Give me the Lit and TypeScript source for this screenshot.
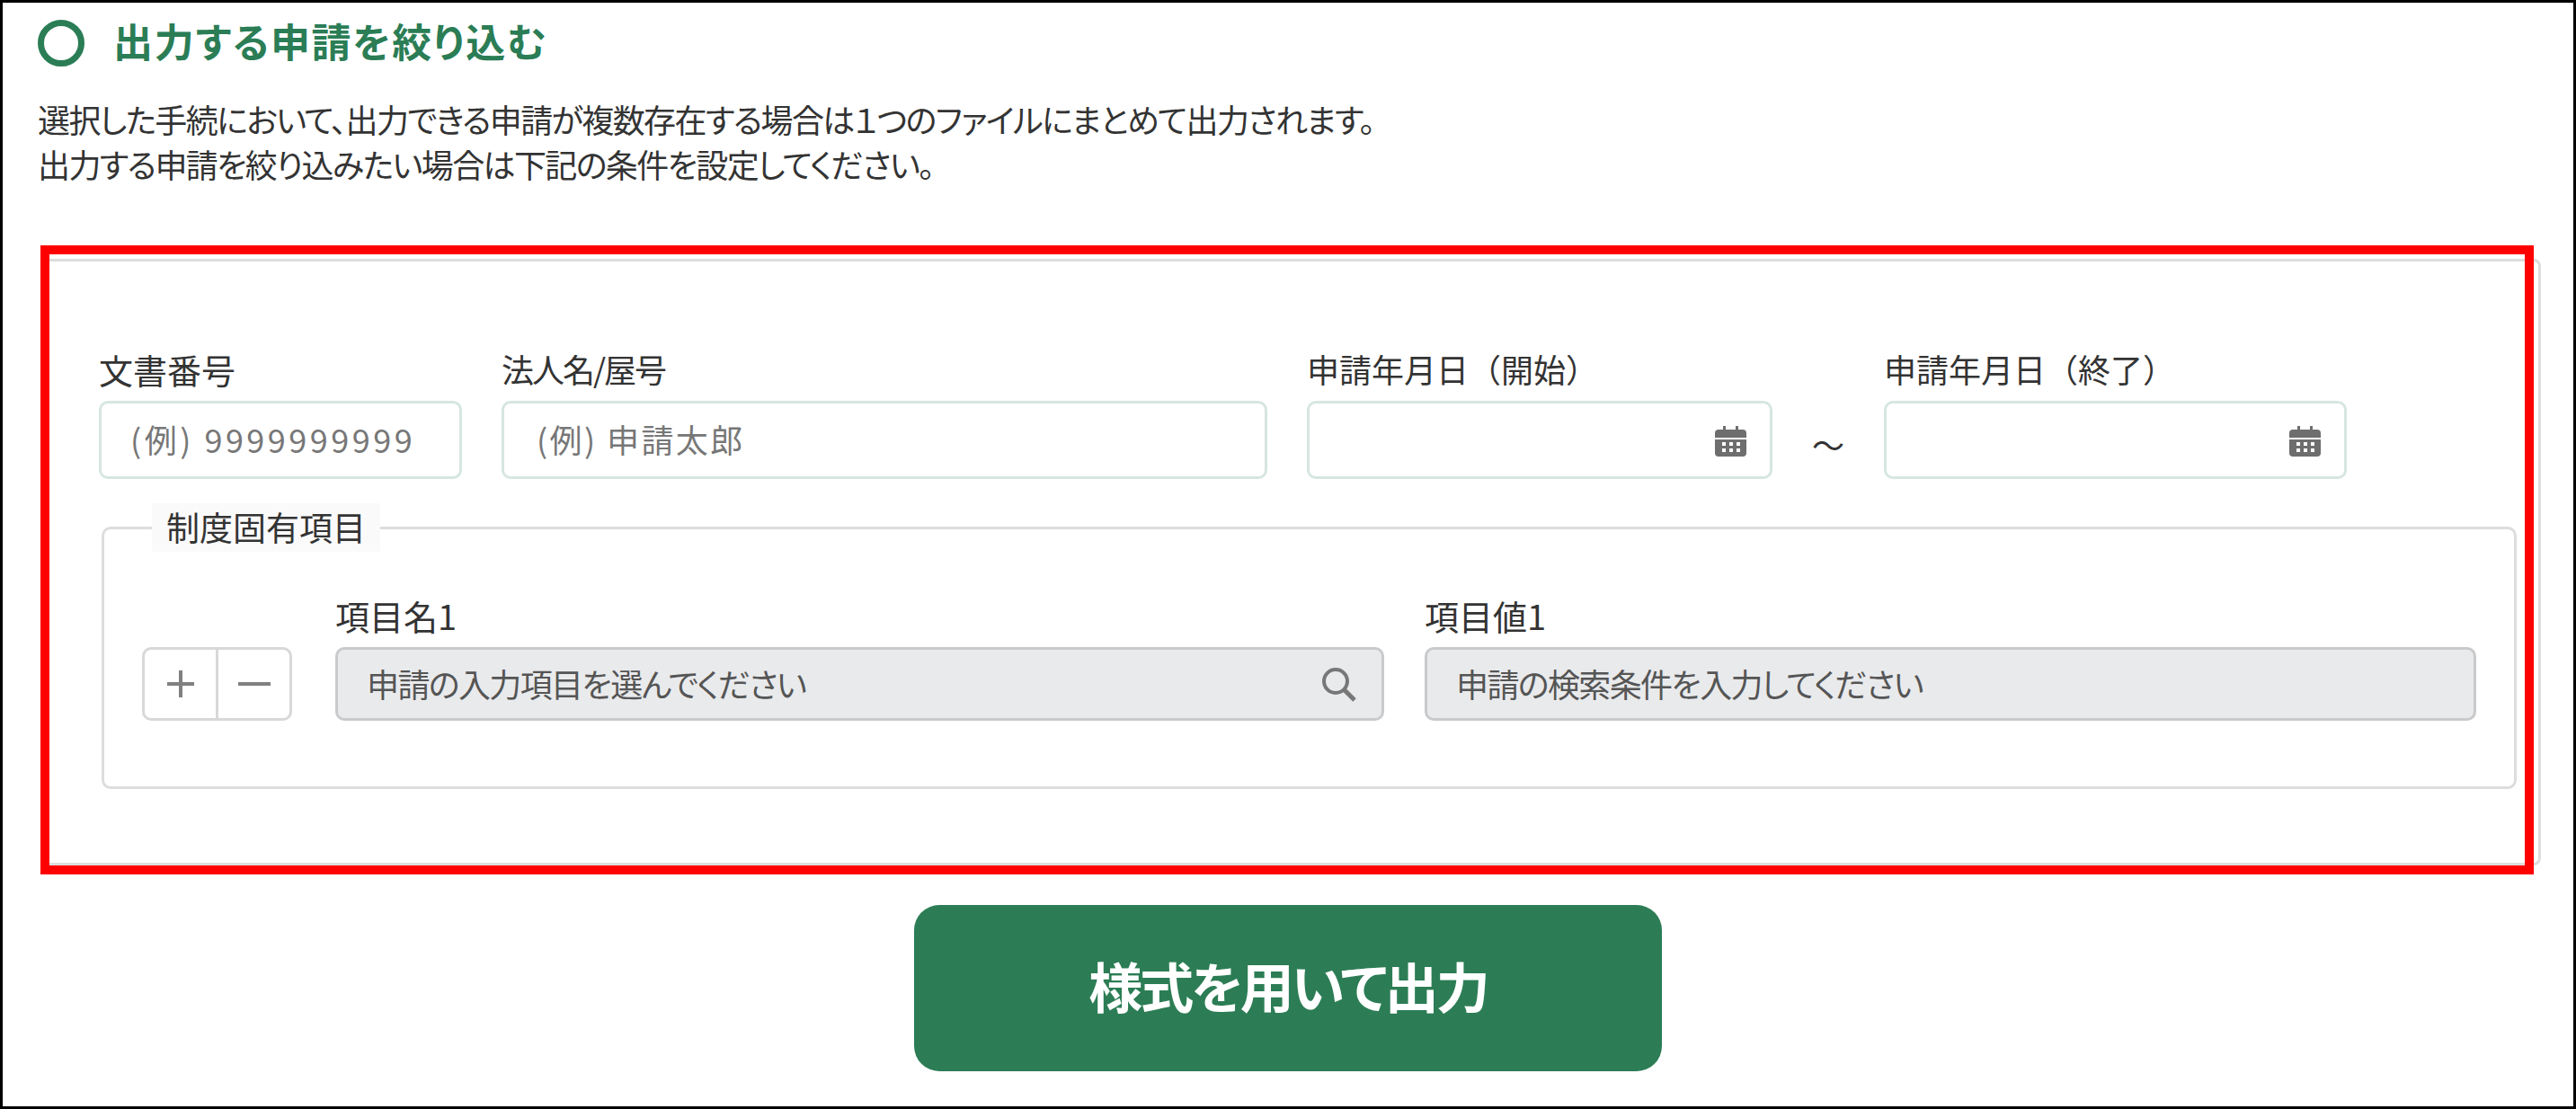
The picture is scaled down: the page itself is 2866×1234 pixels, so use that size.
import { LitElement, html, css } from 'lit';
import { customElement } from 'lit/decorators.js';

const calendarIcon = html`
  <svg class="icon calendar" width="35" height="34" viewBox="0 0 35 34">
    <path fill="#6e6e6e" fill-rule="evenodd" d="M9 0h3v4h11V0h3v4h5a4 4 0 0 1 4 4v5H0V8a4 4 0 0 1 4-4h5zM0 15h35v15a4 4 0 0 1-4 4H4a4 4 0 0 1-4-4zM8 18v4h4v-4zm8 0v4h4v-4zm8 0v4h4v-4zM8 25v4h4v-4zm8 0v4h4v-4zm8 0v4h4v-4z"/>
  </svg>
`;

const searchIcon = html`
  <svg class="icon" width="40" height="40" viewBox="0 0 40 40">
    <circle cx="17" cy="17" r="13" fill="none" stroke="#777" stroke-width="4"/>
    <path d="M26.5 26.5 38 38" fill="none" stroke="#777" stroke-width="5"/>
  </svg>
`;

@customElement('app-root')
export class AppRoot extends LitElement {
  static styles = css`
    :host {
      display: block;
      box-sizing: border-box;
      width: 2866px;
      height: 1234px;
      border: 3px solid #000;
      background: #fff;
      color: #333;
      font-family: 'Noto Sans CJK JP', 'Noto Sans', sans-serif;
      font-size: 36px;
      font-feature-settings: 'palt';
      overflow: hidden;
    }

    .title {
      display: flex;
      align-items: center;
      gap: 32px;
      height: 52px;
      margin: 19px 0 0 39px;
      color: #2b7d55;
      font-size: 44px;
      font-weight: 700;
      letter-spacing: 1.7px;
      line-height: 46px;
    }

    .title span:last-child {
      margin-bottom: 6px;
    }

    .circle {
      box-sizing: border-box;
      width: 52px;
      height: 52px;
      border: 7px solid #2b7d55;
      border-radius: 50%;
    }

    .desc {
      margin: 33px 0 0 39px;
      font-size: 36px;
      letter-spacing: -1.6px;
      line-height: 50px;
    }

    .panel {
      position: relative;
      box-sizing: border-box;
      width: 2782px;
      height: 675px;
      margin: 81px 0 0 42px;
      padding: 102px 0 0 62px;
      border: 3px solid #ddd;
      border-radius: 8px;
    }

    /* annotation frame drawn on top of the panel */
    .frame {
      position: absolute;
      top: -18px;
      left: -3px;
      width: 2774px;
      height: 700px;
      box-sizing: border-box;
      border: 10px solid #f00;
      pointer-events: none;
    }

    .row {
      display: grid;
      grid-template-columns: 404px 852px 518px 36px 515px;
      column-gap: 44px;
      align-items: end;
    }

    .tilde {
      height: 86px;
      text-align: center;
      line-height: 94px;
    }

    label {
      display: block;
      height: 40px;
      margin-bottom: 13px;
      font-size: 38px;
      line-height: 35px;
    }

    label.tight {
      font-size: 36px;
      letter-spacing: -2px;
    }

    label.wide {
      font-size: 36px;
      font-feature-settings: normal;
    }

    .control {
      display: flex;
      align-items: center;
      box-sizing: border-box;
      height: 87px;
      padding: 0 28px 0 32px;
      border: 3px solid #d6e6e1;
      border-radius: 10px;
      background: #fff;
    }

    .control input {
      flex: 1;
      min-width: 0;
      margin-bottom: 4px;
      padding: 0;
      border: 0;
      outline: 0;
      background: transparent;
      color: inherit;
      font: inherit;
      font-feature-settings: inherit;
      letter-spacing: 2.4px;
    }

    .control input.digits {
      letter-spacing: 3.5px;
    }

    .control input.name {
      margin-left: 4px;
    }

    .control input::placeholder {
      color: #777;
      opacity: 1;
    }

    .control.off {
      height: 82px;
      border-color: #c9cacc;
      background: #e9eaec;
    }

    .control.off input {
      margin-bottom: 2px;
      letter-spacing: -1.6px;
    }

    .control.off input::placeholder {
      color: #555;
    }

    .icon {
      flex: none;
    }

    .calendar {
      margin: 3px -2px 0 0;
    }

    fieldset {
      box-sizing: border-box;
      width: 2687px;
      height: 318px;
      min-width: 0;
      margin: 27px 0 0 3px;
      padding: 0 25px 0 42px;
      border: 3px solid #ddd;
      border-radius: 10px;
    }

    legend {
      box-sizing: border-box;
      height: 54px;
      margin-left: 11px;
      padding: 0 16px;
      background: #fafafa;
      font-size: 37px;
      line-height: 52px;
    }

    .items {
      display: grid;
      grid-template-columns: 170px 1167px 1170px;
      column-gap: 45px;
      align-items: end;
      margin-top: 53px;
    }

    .stepper {
      display: flex;
      box-sizing: border-box;
      width: 167px;
      height: 82px;
      border: 3px solid #d8d8d8;
      border-radius: 10px;
    }

    .stepper button {
      display: flex;
      flex: 1;
      align-items: center;
      justify-content: center;
      padding: 0;
      border: 0;
      background: transparent;
    }

    .stepper button + button {
      border-left: 3px solid #d8d8d8;
    }

    .actions {
      display: flex;
      justify-content: center;
      margin-top: 44px;
    }

    .submit {
      width: 832px;
      height: 185px;
      padding: 0 0 8px;
      border: 0;
      border-radius: 28px;
      background: #2c7d55;
      color: #fff;
      font-family: inherit;
      font-feature-settings: inherit;
      font-size: 60px;
      font-weight: 700;
      letter-spacing: -3px;
    }
  `;

  render() {
    return html`
      <div class="title"><span class="circle"></span><span>出力する申請を絞り込む</span></div>
      <p class="desc">
        選択した手続において、出力できる申請が複数存在する場合は１つのファイルにまとめて出力されます。<br />
        出力する申請を絞り込みたい場合は下記の条件を設定してください。
      </p>

      <section class="panel">
        <div class="row">
          <div>
            <label>文書番号</label>
            <div class="control"><input class="digits" placeholder="(例) 9999999999" /></div>
          </div>
          <div>
            <label class="tight">法人名/屋号</label>
            <div class="control"><input class="name" placeholder="(例) 申請太郎" /></div>
          </div>
          <div>
            <label class="wide">申請年月日（開始）</label>
            <div class="control"><input />${calendarIcon}</div>
          </div>
          <div class="tilde">～</div>
          <div>
            <label class="wide">申請年月日（終了）</label>
            <div class="control"><input />${calendarIcon}</div>
          </div>
        </div>

        <fieldset>
          <legend>制度固有項目</legend>
          <div class="items">
            <div class="stepper">
              <button aria-label="追加">
                <svg width="32" height="32" viewBox="0 0 32 32"><path d="M16 1v30M1 16h30" stroke="#808080" stroke-width="4"/></svg>
              </button>
              <button aria-label="削除">
                <svg width="36" height="32" viewBox="0 0 36 32"><path d="M0 16h36" stroke="#808080" stroke-width="4"/></svg>
              </button>
            </div>
            <div>
              <label>項目名1</label>
              <div class="control off"><input disabled placeholder="申請の入力項目を選んでください" />${searchIcon}</div>
            </div>
            <div>
              <label>項目値1</label>
              <div class="control off"><input disabled placeholder="申請の検索条件を入力してください" /></div>
            </div>
          </div>
        </fieldset>

        <div class="frame"></div>
      </section>

      <div class="actions"><button class="submit">様式を用いて出力</button></div>
    `;
  }
}
